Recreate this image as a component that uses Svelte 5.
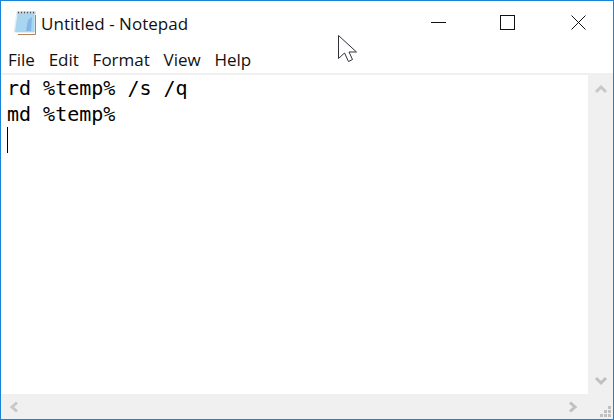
<script>
  const menus = ['File', 'Edit', 'Format', 'View', 'Help'];
</script>

<div class="window">
  <header class="titlebar">
    <svg class="app-icon" width="24" height="24" viewBox="0 0 24 24">
      <path d="M3.5 0.5H22.5V22H4L0.5 21Z" fill="#e4eef4"/>
      <path d="M4.5 3H21.5V21H2Z" fill="#a8d6ee"/>
      <path d="M15 9L19 6L18 20H13Z" fill="#7fb2e8" opacity=".85"/>
      <path d="M4 0.5H22.5V3H4Z" fill="#c6cacd"/>
      <path d="M5 1.5h1M8 1.5h1M11 1.5h1M14 1.5h1M17 1.5h1M20 1.5h1" stroke="#46505c" stroke-width="1.5"/>
      <path d="M5 23.5H22.5V4" fill="none" stroke="#b0845a" stroke-width="1"/>
    </svg>
    <span class="title">Untitled - Notepad</span>
    <div class="controls">
      <button aria-label="Minimize"><svg width="15" height="15" viewBox="0 0 15 15"><path d="M0 7.5H15" stroke="#111" stroke-width="1"/></svg></button>
      <button aria-label="Maximize"><svg width="15" height="15" viewBox="0 0 15 15"><rect x="0.5" y="0.5" width="14" height="14" fill="none" stroke="#111" stroke-width="1"/></svg></button>
      <button aria-label="Close"><svg width="15" height="15" viewBox="0 0 15 15"><path d="M0.5 0.5L14.5 14.5M14.5 0.5L0.5 14.5" stroke="#111" stroke-width="1"/></svg></button>
    </div>
  </header>

  <nav class="menubar">
    {#each menus as m}<span>{m}</span>{/each}
  </nav>

  <div class="body">
    <div class="editor">
      <pre>rd %temp% /s /q
md %temp%
<i class="caret"></i></pre>
    </div>
    <div class="vscroll">
      <svg width="14" height="12" viewBox="0 0 14 12"><path d="M2 9L7 4L12 9" fill="none" stroke="#c8c8c8" stroke-width="3"/></svg>
      <svg width="14" height="12" viewBox="0 0 14 12"><path d="M2 3L7 8L12 3" fill="none" stroke="#c0c0c0" stroke-width="3"/></svg>
    </div>
  </div>

  <div class="hscroll">
    <svg width="12" height="14" viewBox="0 0 12 14"><path d="M9 2.5L4 7L9 11.5" fill="none" stroke="#c8c8c8" stroke-width="3"/></svg>
    <svg width="12" height="14" viewBox="0 0 12 14"><path d="M3 2.5L8 7L3 11.5" fill="none" stroke="#c0c0c0" stroke-width="3"/></svg>
    <div class="grip">
      <svg width="11" height="11" viewBox="0 0 11 11" fill="#c0c0c0">
        <rect x="8" y="0" width="3" height="3"/>
        <rect x="4" y="4" width="3" height="3"/><rect x="8" y="4" width="3" height="3"/>
        <rect x="0" y="8" width="3" height="3"/><rect x="4" y="8" width="3" height="3"/><rect x="8" y="8" width="3" height="3"/>
      </svg>
    </div>
  </div>

  <svg class="pointer" width="21" height="29" viewBox="0 0 21 29">
    <path d="M1.5 1.5V24.5L7.5 19L11.5 27.5L15.5 25.5L12 18H19.5Z" fill="#fff" stroke="#30303a" stroke-width="1"/>
  </svg>
</div>

<style>
  :global(body) { margin: 0; background: #fff; }
  .window {
    position: relative;
    width: 614px;
    height: 420px;
    box-sizing: border-box;
    border: 1px solid #1883d7;
    display: flex;
    flex-direction: column;
    background: #fff;
    overflow: hidden;
  }
  .titlebar {
    height: 44px;
    flex: none;
    display: flex;
    align-items: center;
    padding-left: 12px;
    gap: 4px;
  }
  .app-icon { flex: none; margin-top: -1px; }
  .title {
    font: 17px/20px "Open Sans", "Noto Sans", sans-serif;
    color: #111;
    margin-top: 2px;
    letter-spacing: 0.03px;
  }
  .controls { margin-left: auto; margin-right: -1px; display: flex; align-self: stretch; }
  .controls button {
    width: 71px;
    border: 0;
    padding: 14px 0 0;
    background: none;
    display: flex;
    align-items: flex-start;
    justify-content: center;
  }
  .controls button:first-child { width: 69px; padding-left: 2px; }
  .menubar {
    height: 30px;
    flex: none;
    display: flex;
    align-items: center;
    gap: 13.75px;
    padding-left: 7px;
    font: 17px/20px "Open Sans", "Noto Sans", sans-serif;
    color: #111;
    box-sizing: border-box;
    padding-top: 1px;
    border-bottom: 2px solid #f0f0f0;
  }
  .body { flex: 1; display: flex; min-height: 0; }
  .editor { flex: 1; padding: 0 0 0 6px; }
  pre {
    margin: 0;
    font: 20px/26px "DejaVu Sans Mono", "Liberation Mono", monospace;
    font-weight: 500;
    color: #000;
  }
  .caret {
    display: inline-block;
    width: 1px;
    height: 26px;
    background: #000;
    vertical-align: top;
  }
  .vscroll {
    width: 25px;
    background: #f0f0f0;
    display: flex;
    flex-direction: column;
    align-items: center;
    justify-content: space-between;
    padding: 8px 0 7px;
    box-sizing: border-box;
  }
  .hscroll {
    height: 25px;
    flex: none;
    background: #f0f0f0;
    display: flex;
    align-items: center;
    padding-left: 7px;
  }
  .hscroll > svg:nth-child(2) { margin-left: auto; margin-right: 34px; }
  .grip { position: absolute; right: 2px; bottom: 2px; width: 11px; height: 11px; line-height: 0; }
  .pointer { position: absolute; left: 336px; top: 33px; }
</style>
